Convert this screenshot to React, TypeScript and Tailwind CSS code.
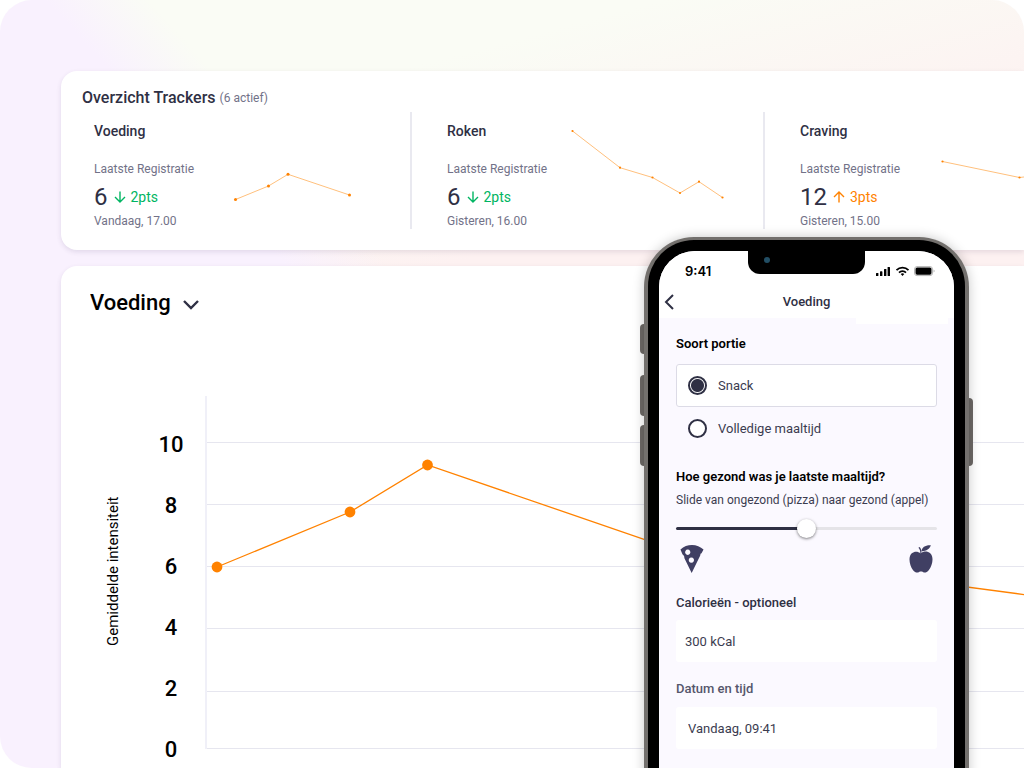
import { useState } from "react";

type Point = [number, number];

interface Tracker {
  name: string;
  value: number;
  delta: string;
  up: boolean;
  time: string;
  points: Point[];
  dot: number;
}

const trackers: Tracker[] = [
  {
    name: "Voeding",
    value: 6,
    delta: "2pts",
    up: false,
    time: "Vandaag, 17.00",
    points: [[21.5, 87.5], [54.5, 74], [74, 62.3], [135.5, 83]],
    dot: 1.5,
  },
  {
    name: "Roken",
    value: 6,
    delta: "2pts",
    up: false,
    time: "Gisteren, 16.00",
    points: [[5.5, 19], [53, 55.7], [85.5, 65.5], [113, 81], [132, 69.7], [155.5, 85.5]],
    dot: 1.1,
  },
  {
    name: "Craving",
    value: 12,
    delta: "3pts",
    up: true,
    time: "Gisteren, 15.00",
    points: [[22.5, 49.5], [99.5, 65.5], [130, 62]],
    dot: 1.1,
  },
];

const chartPoints: Point[] = [[12, 171], [145, 116], [222.5, 69], [463, 151.5], [830, 200]];
const gridLines = [46.5, 108.5, 170.5, 232.5, 295.5, 352.5];

const toPath = (points: Point[]) => points.map((p) => p.join(",")).join(" ");

function Arrow({ up }: { up: boolean }) {
  return (
    <svg viewBox="0 0 12 12" className="h-3 w-3" fill="none" stroke="currentColor" strokeWidth="1.4" aria-hidden="true">
      {up ? <path d="M6 11.5V1.2M1 6l5-5 5 5" /> : <path d="M6 .5v10.3M1 6l5 5 5-5" />}
    </svg>
  );
}

function TrackerCell({ tracker }: { tracker: Tracker }) {
  return (
    <article className="mr-[35px] flex w-[318px] shrink-0 border-r-2 border-[#e9e9f0]">
      <div className="w-[120px] shrink-0 whitespace-nowrap pt-[9px]">
        <h3 className="text-sm font-medium leading-5 text-[#2f3044]">{tracker.name}</h3>
        <p className="mt-5 text-xs leading-4 text-[#727288]">Laatste Registratie</p>
        <p className="mt-[6px] flex items-center leading-7">
          <span className="text-2xl leading-7 text-[#2f3044]">{tracker.value}</span>
          <span
            className={
              tracker.up
                ? "ml-[6px] flex items-center gap-[5px] text-sm text-[#ff8200]"
                : "ml-[6px] flex items-center gap-[5px] text-sm text-[#00b562]"
            }
          >
            <Arrow up={tracker.up} />
            {tracker.delta}
          </span>
        </p>
        <p className="mt-[2px] text-xs leading-4 text-[#727288]">{tracker.time}</p>
      </div>
      <svg className="h-[116px] w-[196px]" viewBox="0 0 196 116" aria-hidden="true">
        <polyline points={toPath(tracker.points)} fill="none" stroke="#ffc07d" strokeWidth="1" />
        {tracker.points.map(([x, y]) => (
          <circle key={x} cx={x} cy={y} r={tracker.dot} fill="#ff8200" />
        ))}
      </svg>
    </article>
  );
}

function Overview() {
  return (
    <section className="shrink-0 overflow-hidden rounded-l-2xl bg-white pb-[21px] pl-[21px] pt-[17px] shadow-[0_2px_5px_rgba(60,40,90,0.12)]">
      <h2 className="flex items-center gap-1 text-base font-medium leading-5 text-[#2f3044]">
        Overzicht Trackers
        <span className="text-xs font-normal text-[#727288]">(6 actief)</span>
      </h2>
      <div className="mt-1 flex pl-3">
        {trackers.map((t) => (
          <TrackerCell key={t.name} tracker={t} />
        ))}
      </div>
    </section>
  );
}

function ChartCard() {
  return (
    <section className="mt-4 flex-1 overflow-hidden rounded-tl-2xl bg-white pt-[23px] shadow-[0_2px_5px_rgba(60,40,90,0.12)]">
      <div className="flex items-center pl-[29px]">
        <select
          aria-label="Tracker"
          className="w-[93px] appearance-none bg-transparent text-[22px] font-medium leading-7 text-black"
        >
          <option>Voeding</option>
        </select>
        <svg viewBox="0 0 16 10" className="mt-1 h-[10px] w-4" fill="none" stroke="#2f3044" strokeWidth="2.4" aria-hidden="true">
          <path d="M1 1l7 7 7-7" />
        </svg>
      </div>
      <div className="mt-[79px] flex">
        <p className="ml-[42px] mt-[100px] h-[150px] w-5 shrink-0 rotate-180 whitespace-nowrap text-[15px] leading-5 text-black [writing-mode:vertical-rl]">
          Gemiddelde intensiteit
        </p>
        <ol className="ml-8 w-8 shrink-0 pt-[18px] text-center text-[22px] font-medium text-black">
          {[10, 8, 6, 4, 2, 0].map((n) => (
            <li key={n} className="leading-[61px]">
              {n}
            </li>
          ))}
        </ol>
        <svg className="ml-[18px] h-[354px] w-[830px] shrink-0" viewBox="0 0 830 354" aria-label="Gemiddelde intensiteit per dag">
          {gridLines.map((y) => (
            <line key={y} x1="1" x2="830" y1={y} y2={y} stroke="#e6e6ef" />
          ))}
          <line x1="1" x2="1" y1="0" y2="353" stroke="#f0f0f8" strokeWidth="2" />
          <polyline points={toPath(chartPoints)} fill="none" stroke="#ff8200" strokeWidth="1.3" />
          {chartPoints.slice(0, 4).map(([x, y]) => (
            <circle key={x} cx={x} cy={y} r="5.4" fill="#ff8200" />
          ))}
        </svg>
      </div>
    </section>
  );
}

function StatusBar() {
  return (
    <div className="flex h-[39px] items-center justify-between pl-[26px] pr-[19px]">
      <span className="font-[Inter,sans-serif] text-[13px] font-semibold leading-4 text-black">9:41</span>
      <svg viewBox="0 0 60 12" className="h-3 w-[60px]" aria-hidden="true">
        <g fill="#000">
          <rect x="1" y="8" width="2.4" height="3" rx=".6" />
          <rect x="5" y="6.3" width="2.4" height="4.7" rx=".6" />
          <rect x="9" y="4" width="2.4" height="7" rx=".6" />
          <rect x="12.6" y="2" width="2.4" height="9" rx=".6" />
        </g>
        <g fill="none" stroke="#000" strokeWidth="1.8">
          <path d="M21.5 5.2a8.5 8.5 0 0 1 12 0" />
          <path d="M24 7.7a5 5 0 0 1 7 0" />
        </g>
        <path d="M25.7 9.1a2.6 2.6 0 0 1 3.6 0L27.5 11z" fill="#000" />
        <rect x="39.5" y="1.6" width="18" height="9" rx="2.5" fill="none" stroke="#b5b5b5" />
        <rect x="40.5" y="2.5" width="16" height="7.200" rx="1.6" fill="#000" />
        <path d="M58.7 4.6v3c1-.5 1-2.500 0-3z" fill="#999" />
      </svg>
    </div>
  );
}

function Pizza() {
  return (
    <svg viewBox="0 0 70 85" className="h-[28px] w-[24px]" aria-label="Pizza">
      <path
        fill="#403f63"
        fillRule="evenodd"
        d="M0 14C10 4 22 0 35 0s26 5 35 14l-6 11q-4 0-4 7L34 85 12 40q1-8-6-12zM22 14a8 8 0 1 0 .1 0zM33 38a8 8 0 1 0 .1 0z"
      />
    </svg>
  );
}

function Apple() {
  return (
    <svg viewBox="0 0 70 85" className="h-[28px] w-[24px]" aria-label="Appel">
      <g fill="#403f63">
        <path d="M34 25C43 18 55 18 63 25c12 11 7 37-4 51-7 9-14 9-18 6-4-2-8-2-12 0-4 3-12 3-18-5C0 62-5 36 7 25c8-7 19-6 27 0z" />
        <path d="M36 19C38 7 48 0 65 1 61 13 50 20 36 19z" />
        <path d="M33 24c0-7-2-12-6-16l4-2c4 5 6 11 5 18z" />
      </g>
    </svg>
  );
}

function Phone() {
  const [portion, setPortion] = useState("snack");
  const [health, setHealth] = useState(50);
  const radio =
    "h-[19px] w-[19px] shrink-0 appearance-none rounded-full border-2 border-[#2f3044] bg-white checked:bg-[radial-gradient(circle,#2f3044_6px,#fff_7px)]";
  return (
    <aside className="absolute -bottom-5 right-[55px] top-[237px] w-[325px]">
      <i className="absolute -left-1 top-[87px] h-[30px] w-2 rounded-l-sm bg-[#6d6966]" />
      <i className="absolute -left-1 top-[138px] h-[41px] w-2 rounded-l-sm bg-[#6d6966]" />
      <i className="absolute -left-1 top-[188px] h-[41px] w-2 rounded-l-sm bg-[#6d6966]" />
      <i className="absolute -right-1 top-[161px] h-[68px] w-2 rounded-r-sm bg-[#6d6966]" />
      <div className="relative h-full rounded-t-[50px] bg-[#73706d] px-1 pt-[3px] shadow-[0_0_12px_rgba(0,0,0,0.22)]">
        <div className="h-full rounded-t-[46px] bg-black px-[11px] pt-[11px]">
          <div className="relative h-full overflow-hidden rounded-t-[36px] bg-[#fbf9ff]">
            <i className="absolute left-[89px] top-0 h-[23px] w-[117px] rounded-b-xl bg-black" />
            <i className="absolute left-[105px] top-[6px] h-[6px] w-[6px] rounded-full bg-[#224e64]" />
            <header className="bg-white">
              <StatusBar />
              <div className="grid h-7 grid-cols-[24px_1fr_24px] items-start">
                <button type="button" aria-label="Terug" className="ml-[5px] mt-1">
                  <svg viewBox="0 0 10 16" className="h-4 w-[10px]" fill="none" stroke="#2f3044" strokeWidth="2" aria-hidden="true">
                    <path d="M9 1L2 8l7 7" />
                  </svg>
                </button>
                <h2 className="mt-1 text-center text-[13px] font-medium leading-4 text-[#2f3044]">Voeding</h2>
              </div>
            </header>
            <i className="absolute right-[6px] top-[67px] h-[6px] w-[92px] bg-white" />
            <form className="px-[17px] pt-[18px] text-[13px] leading-4 text-[#3b3c50]">
              <fieldset>
                <legend className="font-semibold text-black">Soort portie</legend>
                <label className="mt-3 flex h-[43px] items-center gap-[11px] rounded-[3px] border border-[#dcdbe6] bg-white pl-[11px]">
                  <input
                    type="radio"
                    name="portion"
                    checked={portion === "snack"}
                    onChange={() => setPortion("snack")}
                    className={radio}
                  />
                  Snack
                </label>
                <label className="flex h-[43px] items-center gap-[11px] pl-3">
                  <input
                    type="radio"
                    name="portion"
                    checked={portion === "meal"}
                    onChange={() => setPortion("meal")}
                    className={radio}
                  />
                  Volledige maaltijd
                </label>
              </fieldset>
              <label htmlFor="health" className="mt-[19px] block whitespace-nowrap font-semibold text-black">
                Hoe gezond was je laatste maaltijd?
              </label>
              <p className="mt-[7px] whitespace-nowrap text-xs leading-4">Slide van ongezond (pizza) naar gezond (appel)</p>
              <input
                id="health"
                type="range"
                value={health}
                onChange={(e) => setHealth(Number(e.target.value))}
                className="mt-[10px] block h-5 w-full appearance-none bg-transparent [&::-webkit-slider-runnable-track]:h-[3px] [&::-webkit-slider-runnable-track]:rounded-full [&::-webkit-slider-runnable-track]:bg-[linear-gradient(90deg,#2f3044_50%,#e5e4e8_50%)] [&::-webkit-slider-thumb]:mt-[-8px] [&::-webkit-slider-thumb]:h-[19px] [&::-webkit-slider-thumb]:w-[19px] [&::-webkit-slider-thumb]:appearance-none [&::-webkit-slider-thumb]:rounded-full [&::-webkit-slider-thumb]:bg-white [&::-webkit-slider-thumb]:shadow-[0_1px_3px_rgba(0,0,0,0.5)]"
              />
              <div className="mt-[7px] flex justify-between px-1">
                <Pizza />
                <Apple />
              </div>
              <label htmlFor="calories" className="mt-[22px] block font-medium text-[#2f3044]">
                Calorieën - optioneel
              </label>
              <input
                id="calories"
                type="text"
                defaultValue="300 kCal"
                className="mt-[9px] block h-[42px] w-full rounded-[3px] bg-white pl-[9px] text-[13px]"
              />
              <label htmlFor="date" className="mt-[19px] block font-medium text-[#55566c]">
                Datum en tijd
              </label>
              <input
                id="date"
                type="text"
                defaultValue="Vandaag, 09:41"
                className="mt-[10px] block h-[42px] w-full rounded-[3px] bg-white pl-3 text-[13px]"
              />
            </form>
          </div>
        </div>
      </div>
    </aside>
  );
}

export default function App() {
  return (
    <div className="bg-white font-[Roboto,sans-serif]">
      <main className="relative flex h-screen flex-col overflow-hidden rounded-l-[32px] rounded-tr-[32px] bg-[#fafcf5] bg-[linear-gradient(48deg,#f9f1fe_43%,#f9f1fe00_49%),linear-gradient(165deg,#fdf1f100_17%,#fdf1f1_37%)] pl-[61px] pt-[71px]">
        <Overview />
        <ChartCard />
        <Phone />
      </main>
    </div>
  );
}
